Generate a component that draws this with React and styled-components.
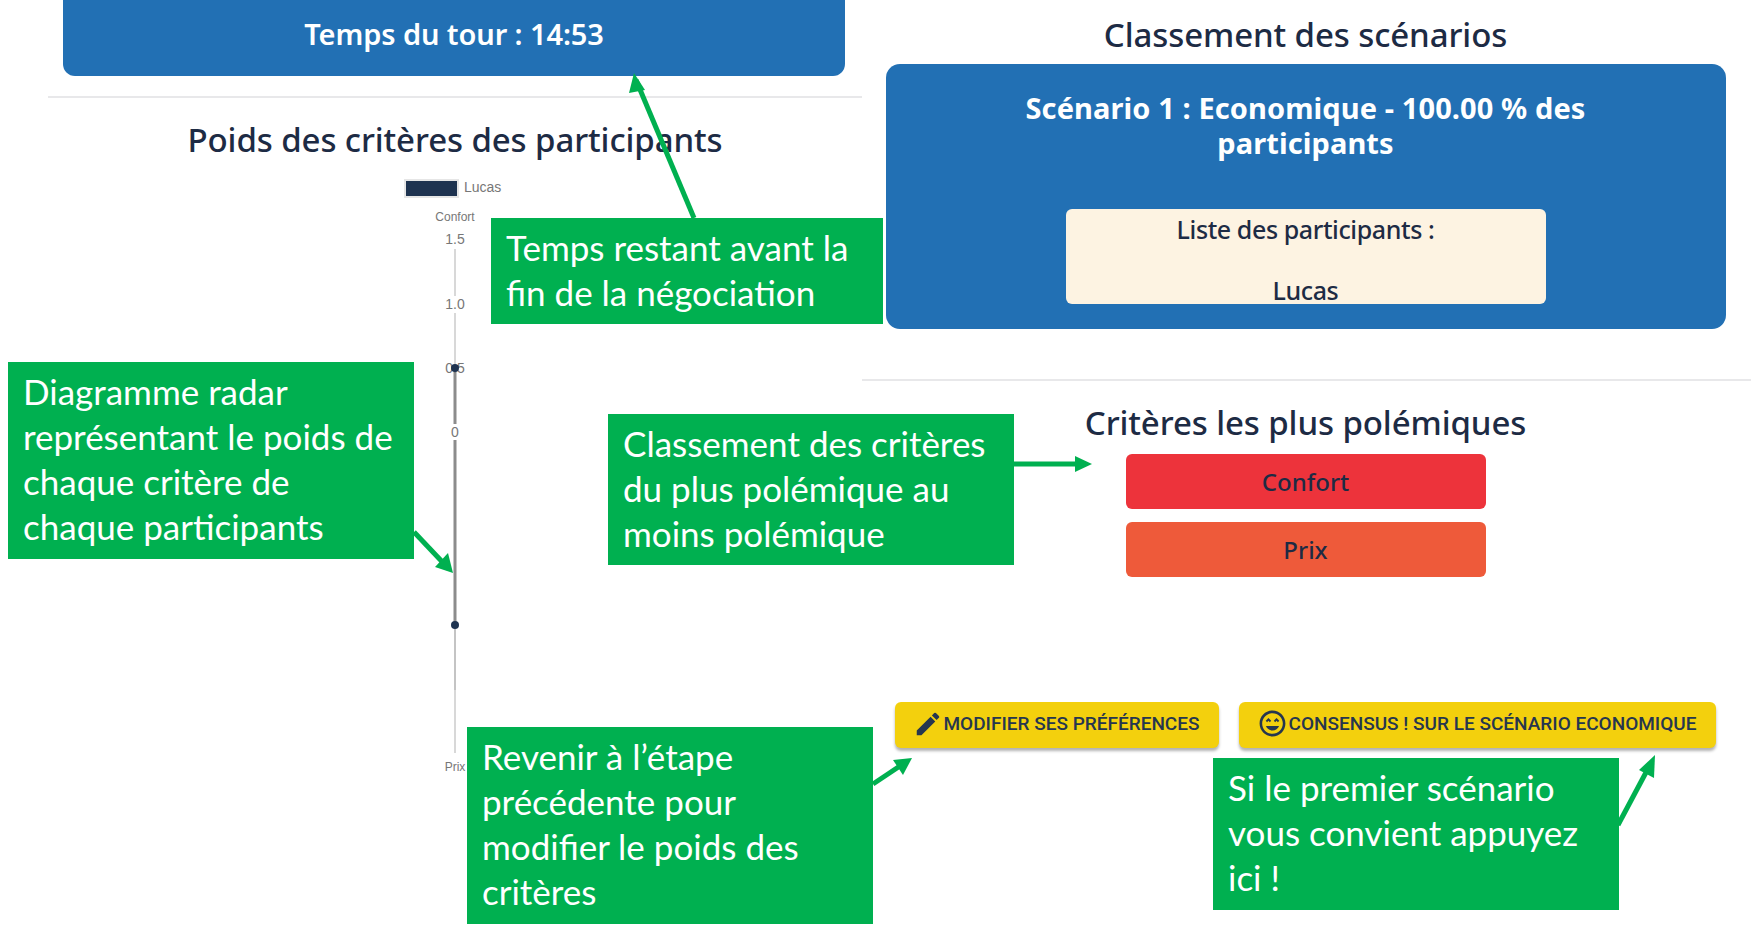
import styled, { createGlobalStyle } from "styled-components";
import { MdEdit, MdOutlineSentimentVerySatisfied } from "react-icons/md";

const GlobalStyle = createGlobalStyle`
  html, body {
    margin: 0;
    padding: 0;
    background: #ffffff;
  }
`;

const callouts = [
  { left: 491, top: 218, width: 392, height: 106, text: "Temps restant avant la fin de la négociation" },
  { left: 8, top: 362, width: 406, height: 197, text: "Diagramme radar représentant le poids de chaque critère de chaque participants" },
  { left: 608, top: 414, width: 406, height: 151, text: "Classement des critères du plus polémique au moins polémique" },
  { left: 467, top: 727, width: 406, height: 197, text: "Revenir à l’étape précédente pour modifier le poids des critères" },
  { left: 1213, top: 758, width: 406, height: 152, text: "Si le premier scénario vous convient appuyez ici !" },
];

const arrows = [
  "M694 218 L636 80",
  "M414 532 L449 569",
  "M1014 464 L1084 464",
  "M873 784 L906 762",
  "M1618 825 L1651 763",
];

const heads = [
  "M634 73 L645 90 L629 93 Z",
  "M453 573 L435 567 L448 553 Z",
  "M1092 464 L1075 456 L1075 472 Z",
  "M912 758 L893 760 L903 775 Z",
  "M1655 755 L1639 770 L1654 778 Z",
];

function RadarChart() {
  return (
    <ChartSvg width="200" height="600" viewBox="354 175 200 600">
      <rect x="404" y="180" width="53" height="17" fill="#1e3350" stroke="#e6e6e6" strokeWidth="2" />
      <text x="463" y="192" fontSize="14" fill="#777">Lucas</text>
      <text x="454" y="221" fontSize="12" fill="#777" textAnchor="middle">Confort</text>
      <line x1="454" y1="249" x2="454" y2="753" stroke="#d8d8d8" strokeWidth="2" />
      <line x1="454" y1="368" x2="454" y2="625" stroke="#8c8c8c" strokeWidth="3" />
      <line x1="454" y1="625" x2="454" y2="690" stroke="#c4c4c4" strokeWidth="2" />
      <text x="454" y="244" fontSize="14" fill="#777" textAnchor="middle">1.5</text>
      <rect x="442" y="296" width="24" height="17" fill="#fff" />
      <text x="454" y="309" fontSize="14" fill="#777" textAnchor="middle">1.0</text>
      <text x="454" y="373" fontSize="14" fill="#777" textAnchor="middle">0.5</text>
      <rect x="446" y="424" width="16" height="16" fill="#fff" />
      <text x="454" y="437" fontSize="14" fill="#777" textAnchor="middle">0</text>
      <circle cx="454" cy="368" r="4" fill="#1e3350" />
      <circle cx="454" cy="625" r="4" fill="#1e3350" />
      <text x="454" y="771" fontSize="12" fill="#777" textAnchor="middle">Prix</text>
    </ChartSvg>
  );
}

export default function App() {
  return (
    <Page>
      <GlobalStyle />
      <LeftColumn>
        <TimerBanner>Temps du tour : 14:53</TimerBanner>
        <Divider />
        <SectionTitle>Poids des critères des participants</SectionTitle>
        <RadarChart />
      </LeftColumn>
      <RightColumn>
        <SectionTitle>Classement des scénarios</SectionTitle>
        <ScenarioCard>
          <ScenarioName>Scénario 1 : Economique - 100.00 % des participants</ScenarioName>
          <ParticipantBox>
            <span>Liste des participants :</span>
            <span>Lucas</span>
          </ParticipantBox>
        </ScenarioCard>
        <RightDivider />
        <SectionTitle>Critères les plus polémiques</SectionTitle>
        <CriteriaList>
          <CriterionRow $bg="#ed333b">Confort</CriterionRow>
          <CriterionRow $bg="#ee5a3a">Prix</CriterionRow>
        </CriteriaList>
        <ActionRow>
          <ActionButton $width={324}>
            <MdEdit size={30} />
            MODIFIER SES PRÉFÉRENCES
          </ActionButton>
          <ActionButton $width={477}>
            <MdOutlineSentimentVerySatisfied size={31} />
            CONSENSUS ! SUR LE SCÉNARIO ECONOMIQUE
          </ActionButton>
        </ActionRow>
      </RightColumn>

      <ArrowLayer width="1751" height="938" viewBox="0 0 1751 938">
        {arrows.map((d) => (
          <path key={d} d={d} stroke="#00b050" strokeWidth="5" fill="none" />
        ))}
        {heads.map((d) => (
          <path key={d} d={d} fill="#00b050" />
        ))}
      </ArrowLayer>

      {callouts.map((c) => (
        <Callout key={c.left} $left={c.left} $top={c.top} $width={c.width} $height={c.height}>
          {c.text}
        </Callout>
      ))}
    </Page>
  );
}

const Page = styled.div`
  position: relative;
  display: grid;
  grid-template-columns: 862px 889px;
  width: 1751px;
  height: 938px;
  overflow: hidden;
  font-family: Roboto, "Noto Sans", sans-serif;
  color: #1d2b44;
`;

const LeftColumn = styled.div`
  display: flex;
  flex-direction: column;
  align-items: center;
  padding-left: 48px;
`;

const RightColumn = styled.div`
  display: flex;
  flex-direction: column;
  align-items: center;
  padding-right: 2px;
`;

const TimerBanner = styled.div`
  align-self: stretch;
  height: 76px;
  margin: 0 17px 0 15px;
  padding-top: 15px;
  box-sizing: border-box;
  background: #2270b4;
  border-radius: 0 0 12px 12px;
  color: #ffffff;
  font-family: "Noto Sans", sans-serif;
  font-size: 29px;
  font-weight: 600;
  line-height: 38px;
  letter-spacing: -0.1px;
  text-align: center;
`;

const Divider = styled.hr`
  align-self: stretch;
  height: 2px;
  margin: 20px 0 0;
  border: 0;
  background: #e8e8ea;
`;

const RightDivider = styled(Divider)`
  align-self: auto;
  width: 100%;
  margin: 50px -2px 0 0;
  box-sizing: content-box;
  padding-right: 2px;
`;

const SectionTitle = styled.h2`
  margin: 19px 0 0;
  font-family: "Noto Sans", sans-serif;
  font-size: 33px;
  font-weight: 500;
  line-height: 46px;
  letter-spacing: -0.1px;
  &:first-child {
    margin-top: 12px;
  }
`;

const ChartSvg = styled.svg`
  margin-top: 12px;
  font-family: "Liberation Sans", sans-serif;
`;

const ScenarioCard = styled.div`
  display: flex;
  flex-direction: column;
  align-items: center;
  width: 840px;
  height: 265px;
  margin-top: 6px;
  padding-top: 26px;
  box-sizing: border-box;
  background: #2270b4;
  border-radius: 14px;
`;

const ScenarioName = styled.div`
  width: 600px;
  height: 119px;
  color: #ffffff;
  font-family: "Noto Sans", sans-serif;
  font-size: 29px;
  font-weight: 700;
  line-height: 35px;
  letter-spacing: 0.1px;
  text-align: center;
`;

const ParticipantBox = styled.div`
  display: flex;
  flex-direction: column;
  gap: 21px;
  align-items: center;
  width: 480px;
  height: 95px;
  background: #fdf3e2;
  border-radius: 6px;
  font-family: "Noto Sans", sans-serif;
  font-size: 25px;
  font-weight: 500;
  line-height: 40px;
  letter-spacing: -0.4px;
`;

const CriteriaList = styled.div`
  display: flex;
  flex-direction: column;
  gap: 13px;
  margin-top: 8px;
`;

const CriterionRow = styled.div`
  width: 360px;
  height: 55px;
  background: ${(p) => p.$bg};
  border-radius: 6px;
  font-family: "Noto Sans", sans-serif;
  font-size: 24px;
  font-weight: 500;
  line-height: 55px;
  text-align: center;
`;

const ActionRow = styled.div`
  display: flex;
  gap: 20px;
  margin-top: 125px;
  padding-right: 1px;
`;

const ActionButton = styled.div`
  display: flex;
  align-items: center;
  justify-content: center;
  width: ${(p) => p.$width}px;
  height: 46px;
  padding-bottom: 3px;
  box-sizing: border-box;
  background: #f3d00d;
  border-radius: 6px;
  box-shadow: 0 3px 3px rgba(0, 0, 0, 0.3);
  color: #26364f;
  font-size: 19px;
  font-weight: 500;
  white-space: nowrap;
`;

const ArrowLayer = styled.svg`
  position: absolute;
  left: 0;
  top: 0;
`;

const Callout = styled.div`
  position: absolute;
  left: ${(p) => p.$left}px;
  top: ${(p) => p.$top}px;
  width: ${(p) => p.$width}px;
  height: ${(p) => p.$height}px;
  padding: 7px 15px 0;
  box-sizing: border-box;
  background: #00b050;
  color: #ffffff;
  font-family: Lato, sans-serif;
  font-size: 35px;
  line-height: 45px;
`;
